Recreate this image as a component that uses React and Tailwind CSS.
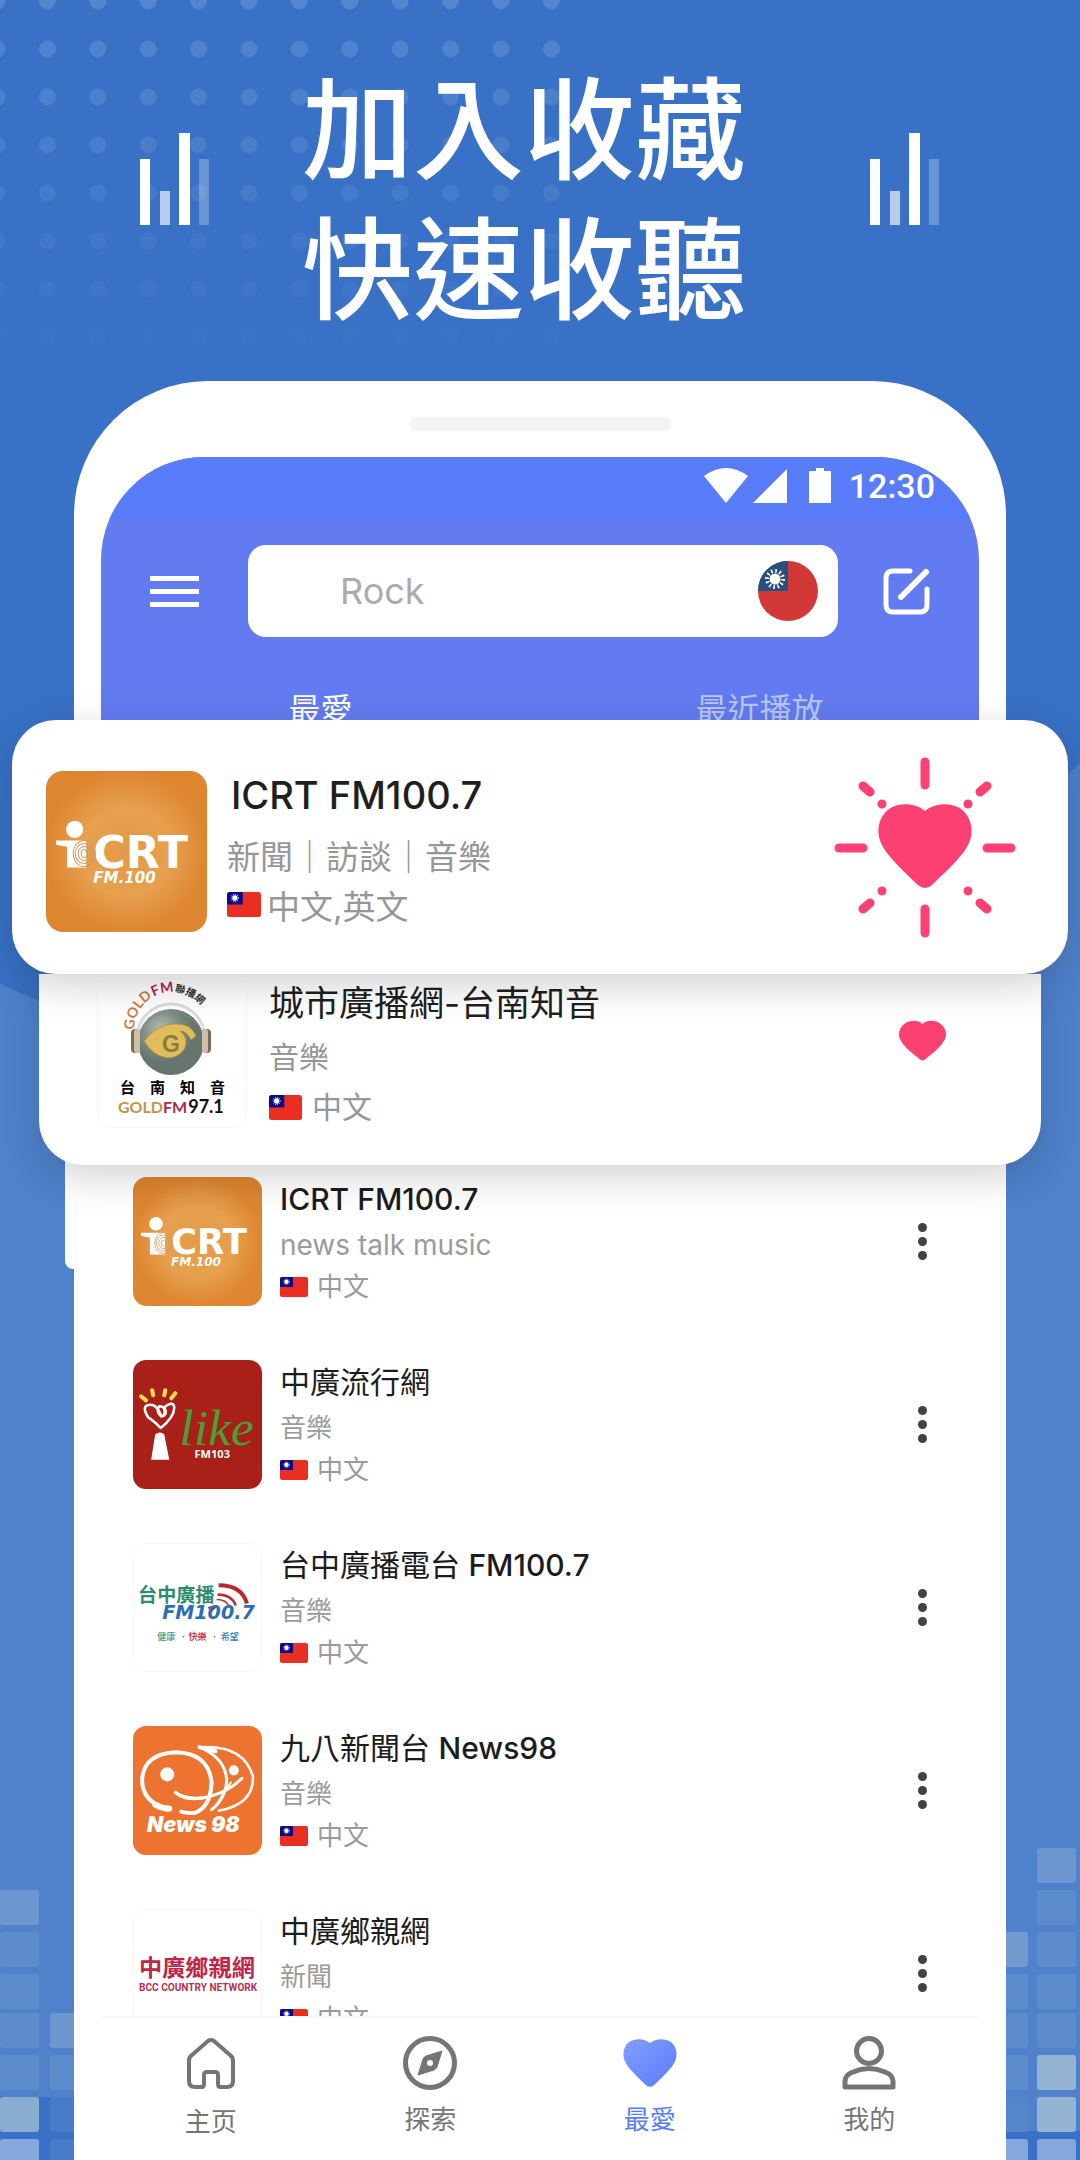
const DOT_ROWS = [1, 49, 97, 145, 193, 241, 289, 337]

const RIGHT_TILES = [
  [1037, 1848, 'fill-[#6d96ce]'], [1037, 1890, 'fill-[#5d8ccd]'], [1037, 1932, 'fill-[#5d8ccd]'],
  [1037, 1974, 'fill-[#5d8ccd]'], [1037, 2013, 'fill-[#5d8ccd]'], [1037, 2055, 'fill-[#95b3d3]'],
  [1037, 2097, 'fill-[#95b3d3]'], [1037, 2139, 'fill-[#86a7de]'],
  [989, 1932, 'fill-[#729acf]'], [989, 1974, 'fill-[#5d8ccd]'], [989, 2013, 'fill-[#5d8ccd]'],
  [989, 2055, 'fill-[#5d8ccd]'], [989, 2097, 'fill-[#5585ca]'], [989, 2139, 'fill-[#86a7de]'],
]

const LEFT_TILES = [
  [0, 1890, 'fill-[#6d96ce]'], [0, 1932, 'fill-[#5d8ccd]'], [0, 1974, 'fill-[#5d8ccd]'],
  [0, 2013, 'fill-[#5d8ccd]'], [0, 2055, 'fill-[#5d8ccd]'], [0, 2097, 'fill-[#89acd1]'], [0, 2139, 'fill-[#86a7de]'],
  [50, 2013, 'fill-[#6d96ce]'], [50, 2055, 'fill-[#5d8ccd]'], [50, 2097, 'fill-[#487cc8]'], [50, 2139, 'fill-[#487cc8]'],
]

const stations = [
  { name: 'ICRT FM100.7', genre: 'news talk music', Logo: IcrtLogo },
  { name: '中廣流行網', genre: '音樂', Logo: LikeLogo },
  { name: '台中廣播電台 FM100.7', genre: '音樂', Logo: TaichungLogo },
  { name: '九八新聞台 News98', genre: '音樂', Logo: News98Logo },
  { name: '中廣鄉親網', genre: '新聞', Logo: CountryLogo },
]

function Backdrop() {
  return (
    <svg className="absolute inset-0 h-full w-full" viewBox="0 0 1080 2160" preserveAspectRatio="none" aria-hidden="true">
      <path className="fill-[#4f82cb]" d="M0 984L400 1160L700 1120L1080 763V2131H540V2097H0z" />
      {DOT_ROWS.map((y, row) =>
        Array.from({ length: 12 }, (_, col) => (
          <circle key={`${row}-${col}`} cx={-3 + col * 50.4} cy={y} r="8.5" fill="#fff" opacity={0.15 - row * 0.019} />
        ))
      )}
      {[...LEFT_TILES, ...RIGHT_TILES].map(([x, y, fill]) => (
        <rect key={`${x}-${y}`} x={x} y={y} width="39" height="35" rx="3" className={fill} />
      ))}
    </svg>
  )
}

function Bars() {
  return (
    <svg className="mt-[74px] h-[92px] w-[70px]" viewBox="0 0 70 92" fill="#fff" aria-hidden="true">
      <rect y="26" width="10" height="66" />
      <rect x="20" y="58" width="10" height="34" opacity="0.65" />
      <rect x="39" width="11" height="92" />
      <rect x="59" y="26" width="10" height="66" opacity="0.25" />
    </svg>
  )
}

function IcrtLogo({ className }) {
  return (
    <svg className={className} viewBox="0 0 160 160" role="img" aria-label="ICRT FM.100">
      <defs>
        <radialGradient id="icrt-glow">
          <stop offset="0" stopColor="#e59a48" />
          <stop offset="0.55" stopColor="#e6a04e" />
          <stop offset="1" stopColor="#de8530" />
        </radialGradient>
      </defs>
      <rect width="160" height="160" rx="17" fill="url(#icrt-glow)" />
      <path d="M10 69H40V96H21V75Q15 75 10 73z" fill="#fff" />
      <circle cx="28.5" cy="58" r="8.5" fill="#fff" />
      <text x="47" y="96" fontSize="44" className="fill-white font-['DejaVu_Sans',sans-serif] font-bold">CRT</text>
      <g fill="none" stroke="#cf9a5b" strokeWidth="1">
        <ellipse cx="38" cy="82" rx="3" ry="4" />
        <ellipse cx="38" cy="82" rx="6" ry="7" />
        <ellipse cx="38" cy="82" rx="9" ry="10" />
        <ellipse cx="38" cy="82" rx="11" ry="13" />
      </g>
      <text x="47" y="111" fontSize="15" className="fill-white font-['DejaVu_Sans',sans-serif] font-bold italic">FM.100</text>
    </svg>
  )
}

function GoldLogo({ className }) {
  return (
    <svg className={className} viewBox="0 0 150 150" role="img" aria-label="GOLD FM97.1">
      <defs>
        <radialGradient id="gold-ball" cx="0.35" cy="0.3">
          <stop offset="0" stopColor="#b3bcb3" />
          <stop offset="0.6" stopColor="#7d8b84" />
          <stop offset="1" stopColor="#66756e" />
        </radialGradient>
        <path id="gold-arc" d="M37 52A38 38 0 1 1 111 64" />
      </defs>
      <rect x="0.5" y="0.5" width="149" height="149" rx="14" fill="none" stroke="#f7f7f7" />
      <circle cx="74" cy="64" r="33" fill="url(#gold-ball)" />
      <path d="M40 60A34 34 0 0 1 108 60" fill="none" stroke="#dcdcdc" strokeWidth="3" />
      <path d="M41 60A34 34 0 0 1 107 60" fill="none" stroke="#8a8a86" strokeWidth="1" />
      <rect x="34" y="51" width="9" height="24" rx="4" fill="#7c6a59" />
      <rect x="37" y="51" width="6" height="24" rx="3" fill="#d0bfa6" />
      <rect x="105" y="51" width="9" height="24" rx="4" fill="#7c6a59" />
      <rect x="105" y="51" width="6" height="24" rx="3" fill="#d0bfa6" />
      <path d="M47 63Q60 46 78 46Q94 45 99 58L94 62Q90 53 83 53Q92 60 88 70Q82 80 70 80Q56 78 47 63z" fill="#e0bd5c" stroke="#a98536" strokeWidth="0.7" />
      <text x="65" y="74" fontSize="23" className="fill-[#8b7a3c] font-['Liberation_Sans',sans-serif] font-bold">G</text>
      <text fontSize="14" className="font-['Lato','Noto_Sans_CJK_TC',sans-serif] font-bold">
        <textPath href="#gold-arc">
          <tspan fill="#c87b4a">GOLD</tspan>
          <tspan fill="#ab2a4c" dx="1">FM</tspan>
          <tspan fill="#333" fontSize="10" dx="1">聯播網</tspan>
        </textPath>
      </text>
      <text x="23" y="115" fontSize="15" className="fill-black font-['Noto_Sans_CJK_TC',sans-serif] font-bold">台　南　知　音</text>
      <text x="21" y="135" className="font-['Lato',sans-serif] font-bold">
        <tspan fill="#c6924a" fontSize="16">GOLD</tspan>
        <tspan fill="#ab2a4c" fontSize="16">FM</tspan>
        <tspan fill="#111" fontSize="18" dx="1">97.1</tspan>
      </text>
    </svg>
  )
}

function LikeLogo({ className }) {
  return (
    <svg className={className} viewBox="0 0 128 128" role="img" aria-label="like FM103">
      <rect width="128" height="128" rx="13" fill="#a82017" />
      <g fill="none" stroke="#f7e04a" strokeWidth="4" strokeLinecap="round">
        <path d="M8 36l5 4M19 30l1 5M32 30l-1 5M42 33l-4 5" />
      </g>
      <path d="M27 67Q20 60 15 57Q9 47 14 45Q22 42 27 53Q29 58 31 54Q33 46 26 46Q22 51 28 56Q35 55 31 47Q40 40 41 47Q41 57 27 68" fill="none" stroke="#fff" strokeWidth="2.5" />
      <path d="M22 74Q27 70 31 74L36 99H18z" fill="#fff" />
      <text x="46" y="84" fontSize="51" className="fill-[#4ba035] font-['Liberation_Serif',serif] italic">like</text>
      <text x="61" y="97" fontSize="11" className="fill-white font-['Open_Sans',sans-serif] font-bold">FM103</text>
    </svg>
  )
}

function TaichungLogo({ className }) {
  return (
    <svg className={className} viewBox="0 0 128 128" role="img" aria-label="台中廣播 FM100.7">
      <rect x="0.5" y="0.5" width="127" height="127" rx="13" fill="none" stroke="#f7f7f7" />
      <text x="5" y="59" fontSize="19" className="fill-[#2e8b6d] font-['Noto_Sans_CJK_TC',sans-serif] font-bold">台中廣播</text>
      <g fill="none" stroke="#b8282e">
        <path d="M85 42Q108 42 113 60" strokeWidth="4" />
        <path d="M84 51Q98 51 102 62" strokeWidth="2.5" />
        <path d="M83 56Q92 56 95 62" strokeWidth="1.5" />
      </g>
      <path d="M78 68L74 64Q78 61 84 63z" fill="#c3262c" />
      <text x="29" y="75" fontSize="19" className="fill-[#2d6db8] font-['DejaVu_Sans',sans-serif] font-bold italic">FM100.7</text>
      <g fontSize="9" className="font-['Noto_Sans_CJK_TC',sans-serif] font-medium">
        <text x="24" y="96" fill="#3c9a7a">健康</text>
        <text x="55" y="96" fill="#c3262c">快樂</text>
        <text x="87" y="96" fill="#3a7fc4">希望</text>
      </g>
      <circle cx="50" cy="93" r="0.8" fill="#666" />
      <circle cx="81" cy="93" r="0.8" fill="#666" />
    </svg>
  )
}

function News98Logo({ className }) {
  return (
    <svg className={className} viewBox="0 0 128 128" role="img" aria-label="News 98">
      <rect width="128" height="128" rx="13" fill="#ec7330" />
      <g fill="none" stroke="#fff" strokeLinecap="round">
        <path d="M35 82Q9 76 9 53Q11 27 43 26Q75 27 78 56Q77 80 62 86Q54 87 48 85" strokeWidth="4" />
        <path d="M22 78Q29 82 36 82" strokeWidth="6" />
        <path d="M42 66Q54 76 76 70Q95 65 108 52" strokeWidth="3" />
        <path d="M66 21Q92 32 93 54Q92 72 78 83" strokeWidth="3" />
        <path d="M66 21Q110 18 119 50Q120 78 85 84" strokeWidth="2.5" />
        <path d="M66 21L82 25" strokeWidth="4" />
        <path d="M97 56Q88 70 84 76" strokeWidth="2" />
      </g>
      <path d="M41 63Q52 73 76 69L74 72Q50 77 41 63z" fill="#fff" />
      <circle cx="34" cy="48" r="7" fill="#fff" />
      <circle cx="100" cy="44" r="5" fill="#fff" />
      <text x="14" y="105" fontSize="21" className="fill-white font-['Inter',sans-serif] font-black italic">News 98</text>
    </svg>
  )
}

function CountryLogo({ className }) {
  return (
    <svg className={className} viewBox="0 0 128 128" role="img" aria-label="中廣鄉親網">
      <rect x="0.5" y="0.5" width="127" height="127" rx="13" fill="none" stroke="#f7f7f7" />
      <text x="6" y="66" fontSize="23" className="fill-[#c02548] font-['Noto_Sans_CJK_TC',sans-serif] font-bold">中廣鄉親網</text>
      <text x="6" y="81" fontSize="10" className="fill-[#b8324f] font-['Roboto',sans-serif] font-bold">BCC COUNTRY NETWORK</text>
    </svg>
  )
}

function Flag({ className }) {
  return (
    <svg className={className} viewBox="0 0 28 20" preserveAspectRatio="none" aria-hidden="true">
      <rect width="28" height="20" rx="2" fill="#ea2f22" />
      <path d="M2 0H13V10H0V2Q0 0 2 0z" fill="#0d0a86" />
      <circle cx="6.5" cy="4.8" r="2.2" fill="#fff" />
      <circle cx="6.5" cy="4.8" r="2.9" fill="none" stroke="#fff" strokeWidth="1" strokeDasharray="0.8 0.9" opacity="0.7" />
    </svg>
  )
}

function RoundFlag() {
  return (
    <svg className="h-[60px] w-[60px] shrink-0" viewBox="0 0 60 60" role="img" aria-label="Taiwan">
      <circle cx="30" cy="30" r="30" fill="#d23836" />
      <path d="M30 0V30H0A30 30 0 0 1 30 0z" fill="#28507f" />
      <circle cx="17" cy="18" r="8" fill="none" stroke="#fff" strokeWidth="4" strokeDasharray="1.6 2.59" />
      <circle cx="17" cy="18" r="5.5" fill="#fff" />
    </svg>
  )
}

function Heart({ className, fill = '#fc4172' }) {
  return (
    <svg className={className} viewBox="0 0 94 80" aria-hidden="true">
      <path d="M47 7C56 -2 73 -1 82 6C94 14 97 28 91 39C84 53 68 65 52 78Q47 82 42 78C26 65 10 53 3 39C-3 28 0 14 12 6C21 -1 38 -2 47 7z" fill={fill} />
    </svg>
  )
}

function BurstHeart() {
  return (
    <svg className="h-[182px] w-[182px]" viewBox="0 0 182 182" aria-hidden="true">
      <g stroke="#fc4172" strokeWidth="9" strokeLinecap="round">
        <path d="M91 5V28M91 152V176M5 91H29M153 91H177" />
        <path d="M29 29L36 35M153 29L146 35M29 152L36 146M153 152L146 146" />
        <path d="M48 47h0.01M134 47h0.01M48 134h0.01M134 134h0.01" />
      </g>
      <path transform="translate(44 47)" d="M47 7C56 -1 73 -2 83 5C94 13 96 28 91 39C86 50 76 60 54 81Q47 87 40 81C18 60 8 50 3 39C-2 28 0 13 11 5C21 -2 38 -1 47 7z" fill="#fc4172" />
    </svg>
  )
}

function StatusBar() {
  return (
    <div className="flex h-[62px] items-center justify-end bg-[#597cfa] pr-11 pb-1 text-white">
      <svg className="h-9 w-[128px]" viewBox="0 0 128 36" fill="#fff" aria-hidden="true">
        <path d="M0 8Q22 -8 44 8L22 35z" />
        <path d="M83 1V35H49z" />
        <path d="M105 3H112V0H120V3H127V35H105z" />
      </svg>
      <span className="ml-[17px] font-['Roboto',sans-serif] text-[34px] leading-none font-medium">12:30</span>
    </div>
  )
}

function StationRow({ name, genre, Logo }) {
  return (
    <li className="flex h-[183px] items-start">
      <Logo className="h-[129px] w-[129px] shrink-0" />
      <div className="ml-[18px] flex-1">
        <h2 className="text-[30px] leading-[44px] font-medium text-[#1c1c1c]">
          <StationName name={name} />
        </h2>
        <p className={/^[a-z]/.test(genre) ? 'text-[28px] leading-[48px] text-[#9b9b9b]' : 'text-[26px] leading-[48px] text-[#9b9b9b]'}>{genre}</p>
        <p className="flex items-center text-[26px] leading-9 text-[#9b9b9b]">
          <Flag className="mr-[9px] h-5 w-7" />
          中文
        </p>
      </div>
      <button type="button" aria-label={`${name} 選項`} className="mt-11 flex h-10 w-10 flex-col items-center justify-center gap-[5px]">
        <span className="h-[9px] w-[9px] rounded-full bg-[#414141]" />
        <span className="h-[9px] w-[9px] rounded-full bg-[#414141]" />
        <span className="h-[9px] w-[9px] rounded-full bg-[#414141]" />
      </button>
    </li>
  )
}

// Chinese part of a name is set lighter than the Latin part
function StationName({ name }) {
  const at = name.search(/[A-Z]/)
  if (at < 0) return <span className="font-normal">{name}</span>
  return (
    <>
      <span className="font-normal">{name.slice(0, at)}</span>
      {name.slice(at)}
    </>
  )
}

function NavItem({ label, active, children }) {
  return (
    <a href="#" aria-current={active ? 'page' : undefined} className={active ? 'flex flex-col items-center text-[#597cfa]' : 'flex flex-col items-center text-[#757575]'}>
      <span className="flex h-[58px] items-center">{children}</span>
      <span className="mt-2 text-[26px] leading-10">{label}</span>
    </a>
  )
}

function FeaturedCards() {
  return (
    <div className="absolute inset-x-0 top-[720px]">
      <div className="absolute top-[400px] left-[65px] h-[149px] w-9 rounded-bl-lg bg-white" />
      <article className="relative z-10 mx-3 flex h-[254px] items-center rounded-[44px] bg-white pt-2 pr-[52px] pl-[34px] shadow-[0_12px_40px_rgba(0,0,0,0.18)]">
        <IcrtLogo className="h-[161px] w-[161px] shrink-0" />
        <div className="ml-5 flex-1">
          <h2 className="ml-1 text-[38px] leading-[50px] font-medium text-[#1f1f1f]">ICRT FM100.7</h2>
          <p className="mt-3 text-[33px] leading-[50px] text-[#979797]">新聞｜訪談｜音樂</p>
          <p className="flex items-center text-[33px] leading-[50px] text-[#979797]">
            <Flag className="mr-1.5 mb-1.5 h-[25px] w-[34px]" />
            中文,英文
          </p>
        </div>
        <button type="button" aria-label="取消收藏 ICRT FM100.7" className="mb-1.5">
          <BurstHeart />
        </button>
      </article>
      <article className="relative mx-[39px] flex h-[191px] items-start rounded-b-[44px] bg-white pr-[95px] pl-[58px] shadow-[0_12px_40px_rgba(0,0,0,0.18)]">
        <GoldLogo className="mt-1 h-[150px] w-[150px]" />
        <div className="ml-[22px] flex-1">
          <h2 className="mt-1 text-[35px] leading-[50px] text-[#1f1f1f]">城市廣播網-台南知音</h2>
          <p className="mt-1 text-[30px] leading-[50px] text-[#979797]">音樂</p>
          <p className="flex items-center text-[30px] leading-[50px] text-[#979797]">
            <Flag className="mr-2.5 h-[25px] w-[33px]" />
            中文
          </p>
        </div>
        <button type="button" aria-label="取消收藏 城市廣播網-台南知音" className="mt-[45px]">
          <Heart className="h-[43px] w-[47px]" />
        </button>
      </article>
    </div>
  )
}

export default function App() {
  return (
    <main className="relative flex h-screen flex-col overflow-hidden bg-[#3871c5] font-['Inter','Noto_Sans_CJK_TC',sans-serif]">
      <Backdrop />

      <header className="relative flex h-[381px] shrink-0 justify-between px-[140px] pt-[59px]">
        <Bars />
        <h1 className="pt-0.5 pr-8 text-[111px] leading-[140px] font-medium text-white">
          加入收藏
          <br />
          快速收聽
        </h1>
        <Bars />
      </header>

      <section className="relative mx-[74px] flex min-h-0 flex-1 flex-col rounded-t-[134px] bg-white px-[27px]">
        <div className="mx-auto mt-9 mb-[26px] h-[14px] w-[261px] shrink-0 rounded-md bg-[#f4f4f4]" />

        <div className="shrink-0 overflow-hidden rounded-t-[103px] bg-[#627bf0]">
          <StatusBar />
          <div className="flex items-center pt-[26px] pr-[48px] pl-[49px]">
            <button type="button" aria-label="選單" className="flex w-[49px] shrink-0 flex-col gap-2">
              <span className="h-[5px] w-full bg-white" />
              <span className="h-[5px] w-full bg-white" />
              <span className="h-[5px] w-full bg-white" />
            </button>
            <label className="ml-[49px] flex h-[92px] min-w-0 flex-1 items-center rounded-[18px] bg-white pr-5 pl-[92px]">
              <input type="text" aria-label="搜尋" placeholder="Rock" className="w-full min-w-0 flex-1 text-[36px] outline-none placeholder:text-[#ababab]" />
              <RoundFlag />
            </label>
            <button type="button" aria-label="編輯" className="ml-[45px] shrink-0">
              <svg className="h-12 w-12" viewBox="0 0 48 48" fill="none" stroke="#fff" strokeWidth="5" strokeLinecap="round">
                <path d="M27 4H10Q3 4 3 11V38Q3 45 10 45H37Q44 45 44 38V22" />
                <path d="M18 30L43 5" strokeWidth="6" />
              </svg>
            </button>
          </div>
          <div className="mt-[41px] grid h-16 grid-cols-2 text-[32px] leading-16 text-white">
            <button type="button">最愛</button>
            <button type="button" className="text-[#b9c5f9]">最近播放</button>
          </div>
        </div>

        <ul className="min-h-0 flex-1 overflow-hidden pt-[435px] pr-[37px] pl-8">
          {stations.map((station) => (
            <StationRow key={station.name} {...station} />
          ))}
        </ul>

        <nav className="grid h-36 shrink-0 grid-cols-4 border-t-2 border-[#f8f8f8] bg-white pt-4">
          <NavItem label={<span lang="zh-CN" className="font-['Noto_Sans_CJK_SC',sans-serif]">主页</span>}>
            <svg className="h-[52px] w-12" viewBox="0 0 48 52" fill="none" stroke="currentColor" strokeWidth="4" strokeLinejoin="round" aria-hidden="true">
              <path d="M21 4Q24 2 27 4L43 18Q46 20 46 24V44Q46 50 40 50H33Q31 50 31 47V38Q31 35 28 35H20Q17 35 17 38V47Q17 50 15 50H8Q2 50 2 44V24Q2 20 5 18z" />
            </svg>
          </NavItem>
          <NavItem label="探索">
            <svg className="h-[54px] w-[54px]" viewBox="0 0 54 54" aria-hidden="true">
              <circle cx="27" cy="27" r="24.5" fill="none" stroke="currentColor" strokeWidth="5" />
              <path d="M39 15L34 31Q33 33 31 34L15 39L20 23Q21 21 23 20z" fill="currentColor" stroke="currentColor" strokeLinejoin="round" />
              <circle cx="27" cy="27" r="3" fill="#fff" />
            </svg>
          </NavItem>
          <NavItem label="最愛" active>
            <svg width="0" height="0" aria-hidden="true">
              <defs>
                <linearGradient id="nav-heart" x2="1" y2="1">
                  <stop offset="0" stopColor="#839eff" />
                  <stop offset="1" stopColor="#597bf9" />
                </linearGradient>
              </defs>
            </svg>
            <svg className="h-[49px] w-[54px]" viewBox="0 0 94 86" aria-hidden="true">
              <path d="M47 7C56 -1 73 -2 83 5C94 13 96 28 91 39C86 50 76 60 54 81Q47 87 40 81C18 60 8 50 3 39C-2 28 0 13 11 5C21 -2 38 -1 47 7z" fill="url(#nav-heart)" />
            </svg>
          </NavItem>
          <NavItem label="我的">
            <svg className="h-[54px] w-[54px]" viewBox="0 0 54 54" fill="none" stroke="currentColor" strokeWidth="5" strokeLinejoin="round" aria-hidden="true">
              <circle cx="27" cy="15" r="12.5" />
              <path d="M3 51V45Q3 39 11 36Q27 29 43 36Q51 39 51 45V51z" />
            </svg>
          </NavItem>
        </nav>
      </section>

      <FeaturedCards />
    </main>
  )
}
